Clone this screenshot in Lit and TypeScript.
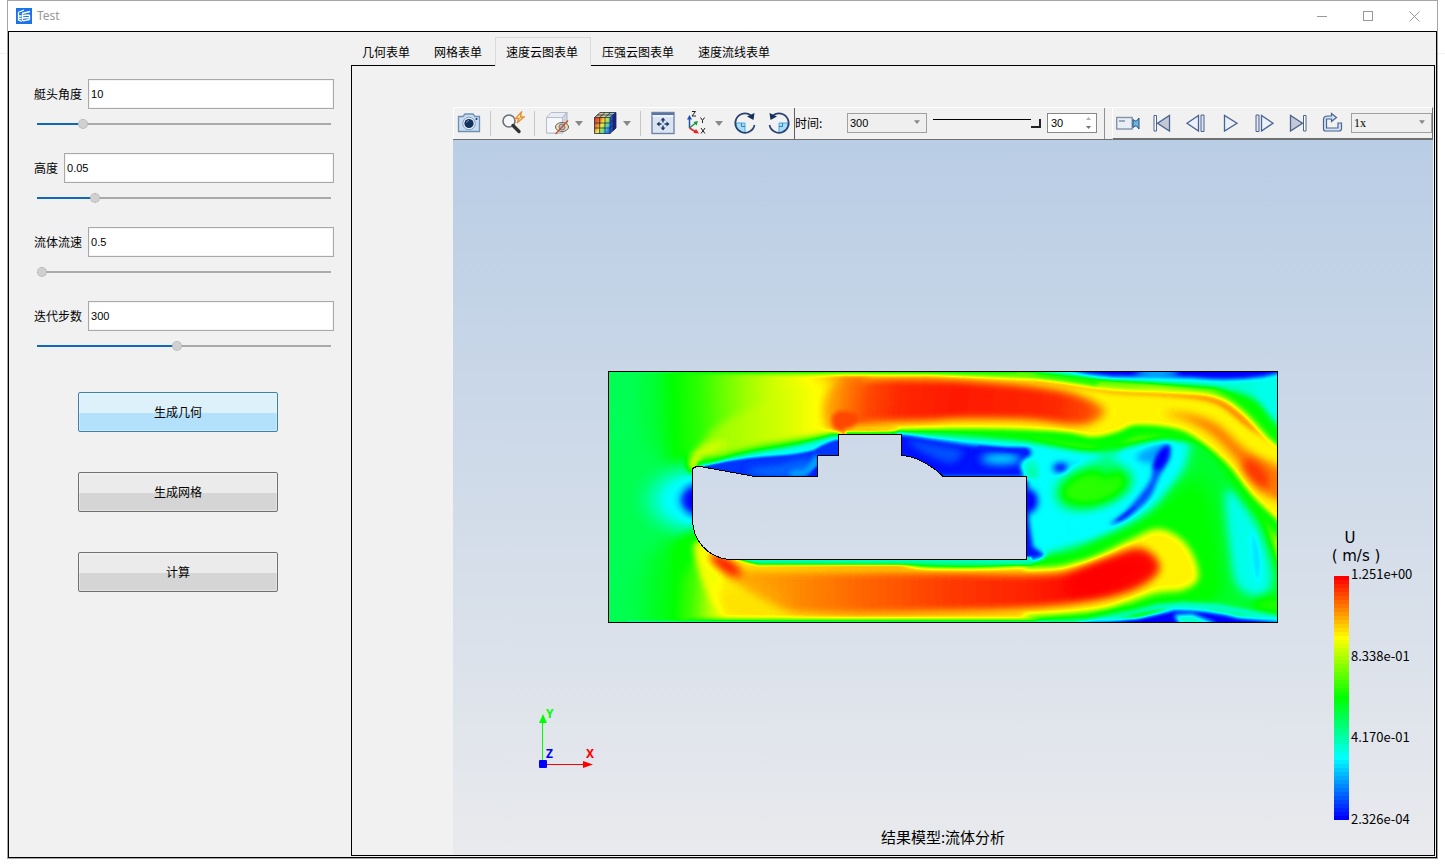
import { LitElement, html, svg, css } from "lit";
import { customElement, state } from "lit/decorators.js";

interface Param {
  id: string;
  label: string;
  value: string;
  pos: number;
}

const clamp = (n: number) => Math.max(0, Math.min(1, n));

/** Rainbow colour for a normalised magnitude: blue, cyan, green, yellow, red. */
const rainbow = (v: number) => {
  const r = clamp((v - 0.5) * 4);
  const g = v < 0.5 ? clamp(v * 4) : clamp((1 - v) * 4);
  const b = clamp((0.5 - v) * 4);
  return `rgb(${Math.round(r * 255)},${Math.round(g * 255)},${Math.round(b * 255)})`;
};

/** Grey level that carries a scalar value until the colour map is applied. */
const grey = (v: number) => {
  const n = Math.round(v * 255);
  return `rgb(${n},${n},${n})`;
};

const stops = (list: [number, number][]) =>
  list.map(([o, v]) => svg`<stop offset=${o} stop-color=${grey(v)} />`);

/** Closed Catmull-Rom curve through "x,y x,y ..." points. */
const smooth = (points: string) => {
  const p = points.split(" ").map((s) => s.split(",").map(Number));
  const n = p.length;
  let d = `M${p[0][0]} ${p[0][1]}`;
  for (let i = 0; i < n; i++) {
    const [a, b, c, e] = [p[(i - 1 + n) % n], p[i], p[(i + 1) % n], p[(i + 2) % n]];
    d += `C${b[0] + (c[0] - a[0]) / 6} ${b[1] + (c[1] - a[1]) / 6} ${c[0] - (e[0] - b[0]) / 6} ${c[1] - (e[1] - b[1]) / 6} ${c[0]} ${c[1]}`;
  }
  return d + "Z";
};

const BODY =
  "M84.5 97.5 L88.5 95.5 L95 96 L147 105.5 H209.5 V84.5 H230.5 V63.5 H293.5 V84.5 Q307 85 322 95 Q329 99 335 105.5 H418.5 V188.5 H120.5 C100 186 84.5 170 84.5 148 Z";

@customElement("velocity-field")
class VelocityField extends LitElement {
  static styles = css`
    :host { display: block; }
    svg { display: block; }
    .line { fill: none; stroke: #000; stroke-width: 1; shape-rendering: crispEdges; }
  `;

  private blob(blur: number, v: number, points: string) {
    return svg`<path filter=${`url(#b${blur})`} fill=${grey(v)} d=${smooth(points)} />`;
  }

  render() {
    return html`<svg width="670" height="252" viewBox="0 0 670 252" role="img" aria-label="U">
      <defs>
        <filter id="map" filterUnits="userSpaceOnUse" x="-40" y="-40" width="750" height="332" color-interpolation-filters="sRGB">
          <feComponentTransfer>
            <feFuncR type="table" tableValues="0 0 0 1 1" />
            <feFuncG type="table" tableValues="0 1 1 1 0" />
            <feFuncB type="table" tableValues="1 1 0 0 0" />
          </feComponentTransfer>
        </filter>
        ${[1, 2, 3, 4, 6, 9].map(
          (n) => svg`<filter id=${"b" + n} filterUnits="userSpaceOnUse" x="-80" y="-80" width="830" height="412" color-interpolation-filters="sRGB"><feGaussianBlur stdDeviation=${n} /></filter>`
        )}
        <linearGradient id="upper" gradientUnits="userSpaceOnUse" x1="0" y1="70" x2="240" y2="62">
          ${stops([[0, 0.41], [0.1, 0.42], [0.2, 0.45], [0.28, 0.5], [0.38, 0.54], [0.48, 0.6], [0.58, 0.655], [0.7, 0.705], [0.82, 0.75], [0.9, 0.79], [1, 0.87]])}
        </linearGradient>
        <linearGradient id="turn" gradientUnits="userSpaceOnUse" x1="84" y1="0" x2="240" y2="0">
          ${stops([[0, 0.64], [0.3, 0.67], [0.6, 0.71], [0.85, 0.76], [1, 0.86]])}
        </linearGradient>
        <linearGradient id="lower" gradientUnits="userSpaceOnUse" x1="0" y1="200" x2="240" y2="215">
          ${stops([[0, 0.41], [0.12, 0.43], [0.27, 0.49], [0.36, 0.57], [0.43, 0.67], [0.5, 0.75], [0.62, 0.79], [1, 0.86]])}
        </linearGradient>
        <linearGradient id="lowjet" gradientUnits="userSpaceOnUse" x1="100" y1="0" x2="550" y2="0">
          ${stops([[0, 0.82], [0.15, 0.85], [0.35, 0.9], [0.55, 0.945], [0.7, 0.965], [0.85, 1], [1, 0.98]])}
        </linearGradient>
        <linearGradient id="upjet" gradientUnits="userSpaceOnUse" x1="222" y1="20" x2="500" y2="60">
          ${stops([[0, 0.83], [0.06, 0.88], [0.14, 0.93], [0.25, 0.96], [0.45, 0.975], [0.8, 0.96], [0.92, 0.93], [1, 0.84]])}
        </linearGradient>
        <radialGradient id="stag">
          <stop offset="0" stop-color=${grey(0.02)} />
          <stop offset="0.16" stop-color=${grey(0.12)} />
          <stop offset="0.28" stop-color=${grey(0.23)} />
          <stop offset="0.48" stop-color=${grey(0.27)} />
          <stop offset="0.7" stop-color=${grey(0.35)} stop-opacity="0.8" />
          <stop offset="1" stop-color=${grey(0.42)} stop-opacity="0" />
        </radialGradient>
        <clipPath id="fluid">
          <path clip-rule="evenodd" d=${"M0 0H670V252H0Z " + BODY} />
        </clipPath>
      </defs>
      <g clip-path="url(#fluid)">
        <g filter="url(#map)">
          <rect x="-40" y="-40" width="750" height="170" fill="url(#upper)" />
          <rect x="-40" y="129" width="750" height="170" fill="url(#lower)" />
          ${this.blob(9, 0.42, "-30,80 30,76 60,96 72,130 62,164 30,184 -30,184")}

          <!-- fast flow bending over the bow -->
          <path filter="url(#b4)" fill="url(#turn)" d=${smooth("82,98 92,76 112,54 150,34 200,10 245,20 240,66 170,74 110,90")} />
          ${this.blob(3, 0.7, "81,98 84,86 94,76 110,70 120,72 100,86 90,98")}

          <!-- stagnation zone ahead of the bow -->
          <ellipse cx="90" cy="129" rx="72" ry="48" fill="url(#stag)" />
          <ellipse filter="url(#b4)" cx="88" cy="129" rx="13" ry="15" fill=${grey(0)} />
          ${this.blob(3, 0.72, "80,98 83,88 92,82 94,92 86,100")}
          ${this.blob(4, 0.5, "66,176 84,160 92,164 88,180 78,200 66,200")}
          ${this.blob(3, 0.74, "86,178 92,170 102,172 114,194 122,226 112,240 96,214")}

          <!-- wake background -->
          ${this.blob(4, 0.25, "294,61 400,63 440,70 490,77 560,65 600,78 640,130 650,200 600,190 540,190 440,192 300,192")}
          ${this.blob(6, 0.46, "592,60 640,106 664,160 680,250 560,240 500,205 450,200 430,190 480,172 512,156 538,130 572,104")}
          ${this.blob(9, 0.5, "580,110 600,120 610,160 612,220 600,226 590,180 560,146 530,150")}
          ${this.blob(4, 0.5, "420,195 470,178 510,156 556,134 592,150 606,190 604,228 540,240 470,230")}
          ${this.blob(4, 0.27, "618,120 640,140 656,172 664,206 658,222 642,224 628,212 622,180")}
          ${this.blob(2, 0.22, "644,158 652,186 650,212 645,190")}
          <ellipse filter="url(#b4)" cx="668" cy="234" rx="24" ry="8" fill=${grey(0.53)} />

          <!-- outer layers of the upper jet -->
          ${this.blob(3, 0.5, "294,50 420,52 500,50 545,44 594,50 640,100 682,156 682,180 650,146 620,106 596,76 568,69 530,69 506,80 486,79 455,75 420,70 340,65 294,62")}
          <path filter="url(#b2)" fill=${grey(0.29)} d="M400 -20H700V60L668 62Q650 30 606 18L540 13L489 10L430 3Z" />
          ${this.blob(3, 0.5, "420,4 455,9 500,17 560,20 606,24 636,42 680,88 680,60 650,30 612,18 555,15 500,11")}
          ${this.blob(3, 0.27, "648,10 700,10 700,62 668,52")}
          ${this.blob(2, 0.76, "258,50 252,28 260,7 322,6 400,8 455,14 505,22 555,25 605,32 639,56 690,96 690,164 666,146 642,122 622,96 595,72 569,58 529,54 509,61 485,66 455,61 389,58 322,58 268,58")}
          <path filter="url(#b1)" fill=${grey(0.78)} d="M230 64L228 52L262 50L290 56V59Q250 58 230 64Z" />
          <path filter="url(#b4)" fill="url(#upjet)" d=${smooth("230,66 216,46 220,24 242,9 322,8 405,13 455,20 482,29 498,40 486,51 465,54 422,49 355,48 322,50 275,52 244,56")} />
          ${this.blob(2, 0.93, "230,65 224,48 232,40 250,44 246,54 236,58")}
          ${this.blob(4, 0.88, "556,42 584,44 610,54 640,80 684,104 684,130 654,122 634,96 606,66 580,50")}
          <ellipse filter="url(#b4)" cx="648" cy="102" rx="18" ry="8" transform="rotate(48 648 102)" fill=${grey(0.95)} />

          <!-- separated pocket on the fore deck -->
          <path filter="url(#b3)" fill=${grey(0.5)} d="M92 94Q130 78 170 72Q205 66 228 61L232 90H92Z" />
          <path filter="url(#b2)" fill=${grey(0.26)} d="M90 96Q120 85 175 77Q205 72 232 62V90L200 92H90Z" />
          <path filter="url(#b1)" fill=${grey(0.05)} d="M91 96Q125 87 178 84Q196 82 206 79Q218 71 232 68V110H100Z" />
          ${this.blob(3, 0.1, "140,98 170,94 200,88 206,100 180,106 150,104")}
          ${this.blob(2, 0.16, "184,100 198,97 208,83 210,96 196,105 182,105")}
          ${this.blob(1, 0.03, "205,99 211,96 212,110 200,108")}
          <path filter="url(#b1)" fill="none" stroke=${grey(0.28)} stroke-width="2" d="M238 62.500L294 62" />

          <!-- pocket aft of the sail -->
          <path filter="url(#b2)" fill=${grey(0.02)} d="M290 62L322 68L355 73L395 77L420 77Q427 81 420 86Q412 90 412 96L416 106H290Z" />
          ${this.blob(3, 0.08, "300,70 330,74 354,80 344,92 320,84")}
          <ellipse filter="url(#b4)" cx="393" cy="88" rx="20" ry="5" fill=${grey(0.24)} />
          <path filter="url(#b1)" fill="none" stroke=${grey(0.03)} stroke-width="4" d="M370 77L400 79L419 80" />
          ${this.blob(2, 0.3, "416,92 428,90 428,104 420,106")}

          <!-- recirculation in the wake -->
          <ellipse filter="url(#b3)" cx="453" cy="97" rx="8" ry="5" fill=${grey(0)} />
          <ellipse filter="url(#b3)" cx="468" cy="94" rx="10" ry="2" transform="rotate(-14 468 94)" fill=${grey(0.15)} />
          <ellipse filter="url(#b6)" cx="486" cy="116" rx="38" ry="21" transform="rotate(-14 486 116)" fill=${grey(0.54)} />
          <ellipse filter="url(#b3)" cx="425" cy="102" rx="5" ry="5" fill=${grey(0.35)} />
          ${this.blob(6, 0.38, "494,84 504,80 506,94 500,104 492,98")}
          <path filter="url(#b4)" fill="none" stroke=${grey(0.25)} stroke-width="22" d="M566 74Q560 100 544 122Q524 146 470 158" />
          ${this.blob(2, 0.08, "561,75 561,88 551,106 542,126 526,142 514,150 502,153 518,140 532,124 543,108 545,92 550,80")}
          ${this.blob(3, 0.16, "528,86 544,76 560,74 552,86 540,92")}
          ${this.blob(2, 0, "560,74 560,86 552,98 546,96 550,82")}
          ${this.blob(1, 0.05, "528,136 518,146 508,150 520,140")}

          <!-- base of the stern -->
          <ellipse filter="url(#b3)" cx="420" cy="130" rx="10" ry="12" fill=${grey(0)} />
          <path filter="url(#b2)" fill=${grey(0.02)} d="M412 110H420L421 150L425 176L438 184L430 192H412Z" />

          <!-- lower jet -->
          ${this.blob(3, 0.5, "420,194 470,186 520,162 556,148 590,170 602,200 590,222 560,230 500,246 420,246")}
          <path filter="url(#b1)" fill=${grey(0.32)} d="M122 186H424V194H150Z" />
          ${this.blob(3, 0.76, "118,196 150,196 300,196 430,197 466,192 489,185 522,169 549,158 572,167 586,186 590,208 575,219 549,222 522,231 489,241 422,245 300,245 150,245 118,244")}
          <path filter="url(#b4)" fill="url(#lowjet)" d=${smooth("101,182 120,192 150,199 322,201 422,203 462,200 495,189 528,177 546,185 551,200 530,217 489,229 422,237 322,241 220,243 170,238 126,212")} />
          ${this.blob(9, 0.78, "112,214 136,222 172,240 150,250 116,240")}
          <ellipse filter="url(#b4)" cx="118" cy="194" rx="18" ry="6" transform="rotate(34 118 194)" fill=${grey(0.99)} />
          <ellipse filter="url(#b6)" cx="500" cy="204" rx="44" ry="12" transform="rotate(-16 500 204)" fill=${grey(1)} />

          <!-- wall layers -->
          <path filter="url(#b2)" fill="none" stroke=${grey(0.5)} stroke-width="5" d="M90 -1Q240 1 322 1L430 5L490 12" />
          <path filter="url(#b1)" fill="none" stroke=${grey(0.3)} stroke-width="3" d="M25 -1H240L430 0" />
          <path filter="url(#b2)" fill=${grey(0)} d="M430 -8H680V0L655 6Q620 11 585 7L545 6L505 6L480 3Z" />
          <ellipse filter="url(#b3)" cx="549" cy="2" rx="22" ry="3" fill=${grey(0.25)} />
          <path filter="url(#b2)" fill="none" stroke=${grey(0.5)} stroke-width="6" d="M80 251H430L480 246L520 238" />
          <path filter="url(#b1)" fill="none" stroke=${grey(0.28)} stroke-width="3" d="M20 252H440" />
          <path filter="url(#b2)" fill="none" stroke=${grey(0.26)} stroke-width="5" d="M430 253L480 251L520 243L550 236L575 234L610 236L672 248" />
          <path filter="url(#b2)" fill=${grey(0)} d="M470 252L530 246L566 238Q600 238 630 246L672 250V262H470Z" />
          <path filter="url(#b2)" fill=${grey(0.3)} d="M566 244L584 243L606 252L612 260H576Z" />
        </g>
      </g>
      <path class="line" d=${BODY} />
      <rect class="line" x="0.5" y="0.5" width="669" height="251" />
    </svg>`;
  }
}

@customElement("app-root")
class AppRoot extends LitElement {
  static styles = css`
    :host {
      display: block;
      height: 100vh;
      background: #fff;
      color: #000;
      font: 12px/16px "Liberation Sans", "Noto Sans CJK SC", sans-serif;
    }
    * { box-sizing: border-box; }
    svg { display: block; }
    button, input, select { font: inherit; color: inherit; margin: 0; }
    .desktop {
      height: 100%;
      padding: 0 7px 7px;
      background: linear-gradient(#f2f2f2, #f2f2f2) 0 53px / 100% 1px no-repeat #fff;
    }
    .window {
      height: 100%;
      display: flex;
      flex-direction: column;
      border: 1px solid #a5a5a5;
      background: #fff;
    }
    .titlebar { height: 30px; flex: none; display: flex; align-items: center; padding-left: 8px; color: #999; }
    .name { flex: 1; padding-left: 5px; font: 12px/16px "Noto Sans", sans-serif; }
    .winbtn { width: 46px; height: 30px; padding: 0; border: 0; background: none; display: grid; place-items: center; }
    .client { flex: 1; min-height: 0; display: flex; border: 1px solid #000; background: #f1f1f1; }

    .side { width: 342px; flex: none; padding: 47px 17px 0 25px; }
    .field { height: 74px; }
    .entry { display: flex; align-items: center; gap: 6px; height: 30px; }
    .entry label { font-family: "Noto Sans CJK SC", sans-serif; }
    .text { flex: 1; min-width: 0; height: 30px; padding: 0 2px 1px; border: 1px solid #a9a9a9; background: #fff; outline: 0; font-size: 11px; box-shadow: inset 0 0 0 1px #f4f4f4; }
    .slide { appearance: none; display: block; width: calc(100% - 6px); height: 16px; margin: 7px 3px 0; background: none; outline: 0; }
    .slide::-webkit-slider-runnable-track {
      height: 2px;
      background: linear-gradient(#0f68b8, #0f68b8) 0 0 / var(--fill) 100% no-repeat #aaa;
    }
    .slide::-webkit-slider-thumb { appearance: none; width: 10px; height: 10px; margin-top: -4px; border: 1px dotted #aaa; border-radius: 50%; background: #d0d0d0; }
    .actions { display: flex; flex-direction: column; align-items: center; gap: 40px; padding: 17px 12px 0 0; }
    .action { width: 200px; height: 40px; border: 1px solid #707070; border-radius: 2px; background: linear-gradient(#ebebeb 52%, #d5d5d5 52%); box-shadow: inset 0 0 0 1px rgba(255, 255, 255, 0.35); font-family: "Noto Sans CJK SC", sans-serif; }
    .action.hot { border-color: #3c7fb1; background: linear-gradient(#ddf1fb 52%, #b3e0fa 52%); }

    .main { flex: 1; min-width: 0; display: flex; flex-direction: column; padding: 0 1px 1px 0; }
    .tabs { display: flex; height: 33px; padding-top: 5px; flex: none; }
    .tab { height: 29px; padding: 0 12px 0 10px; border: 1px solid transparent; background: none; font-family: "Noto Sans CJK SC", sans-serif; white-space: nowrap; }
    .tab.on { position: relative; background: #f1f1f1; border-color: #d9d9d9; border-bottom-color: #f1f1f1; }
    .panel { flex: 1; min-height: 0; display: flex; border: 1px solid #000; padding: 41px 1px 0 101px; }
    .viewer { flex: 1; min-width: 0; display: flex; flex-direction: column; }

    .toolbar { display: flex; height: 33px; flex: none; border-bottom: 1px solid #707070; border-top: 1px solid #fff; }
    .group { display: flex; align-items: center; }
    .first { border-left: 1px solid #fff; border-right: 1px solid #606060; padding: 0 3px 1px; }
    .mid { border-right: 1px solid #909090; padding: 0 7px 1px 0; }
    .last { flex: 1; margin: -1px 0 -1px 7px; border: 1px solid #fff; border-right-color: #707070; border-bottom: 2px solid #707070; padding-left: 3px; }
    .tool, .drop { padding: 0; border: 0; background: none; }
    .tool { width: 24px; height: 24px; }
    .tool + .tool, .drop + .tool { margin-left: 10px; }
    .drop { width: 8px; height: 24px; margin-left: 6px; display: grid; place-items: center; }
    .sep { width: 1px; height: 25px; margin: 0 10px 0 9px; background: #c8c8c8; }
    .time { font: 12px/16px "Noto Sans CJK SC", sans-serif; width: 52px; }
    .combo { position: relative; height: 20px; }
    .combo select { appearance: none; display: block; width: 100%; height: 20px; padding: 0 2px; border: 1px solid #a0a0a0; border-radius: 0; background: #efefef; font-size: 11px; outline: 0; }
    .combo svg { position: absolute; right: 7px; top: 7px; pointer-events: none; }
    .frame { width: 80px; }
    .speed { flex: 1; margin-left: 7px; }
    .combo.speed select { font: 12px/16px "Liberation Serif", serif; }
    .seek { appearance: none; width: 108px; height: 20px; margin: 0 6px; background: none; outline: 0; }
    .seek::-webkit-slider-runnable-track { height: 9px; background: linear-gradient(#000, #000) 0 0 / calc(100% - 10px) 1px no-repeat; }
    .seek::-webkit-slider-thumb { appearance: none; width: 10px; height: 9px; background: #f0f0f0; border: solid #222; border-width: 0 2px 2px 0; }
    .spin { display: flex; width: 50px; height: 20px; border: 1px solid #888; background: #fff; }
    .spin input { flex: 1; min-width: 0; border: 0; outline: 0; padding: 0 0 0 3px; font-size: 11px; background: none; }
    .steps { display: flex; flex-direction: column; width: 15px; }
    .steps button { flex: 1; padding: 0; border: 0; background: none; display: grid; place-items: center; }

    .scene { position: relative; flex: 1; min-height: 0; display: grid; place-items: center; padding-bottom: 2px; background: linear-gradient(#b9cde5, #e9eaed); overflow: hidden; }
    .axes { position: absolute; left: 82px; bottom: 85px; }
    .axes text { font: bold 12px "Noto Sans", sans-serif; }
    .caption { position: absolute; left: 0; right: 0; bottom: 7px; text-align: center; font: 15px/22px "Noto Sans CJK SC", sans-serif; }
    .legend { position: absolute; right: 20px; bottom: 27px; width: 82px; font-family: "Noto Sans CJK SC", sans-serif; }
    .unit { width: 50px; text-align: center; font: 15px/18px "DejaVu Sans", sans-serif; white-space: nowrap; }
    .var { width: 38px; text-align: center; font: 15px/18px "DejaVu Sans", sans-serif; }
    .scale { display: flex; gap: 2px; padding-left: 3px; }
    .bar { margin: 11px 0 8px; }
    .ticks { display: flex; flex-direction: column; justify-content: space-between; font-size: 13px; line-height: 18px; }
  `;

  @state() private params: Param[] = [
    { id: "angle", label: "艇头角度", value: "10", pos: 14.5 },
    { id: "height", label: "高度", value: "0.05", pos: 18.7 },
    { id: "speed", label: "流体流速", value: "0.5", pos: 0 },
    { id: "steps", label: "迭代步数", value: "300", pos: 47.7 },
  ];
  @state() private tab = 2;

  private move(i: number, e: Event) {
    const pos = Number((e.target as HTMLInputElement).value);
    this.params = this.params.map((p, k) => (k === i ? { ...p, pos } : p));
  }

  private arrow(small = false) {
    return html`<svg width=${small ? 6 : 8} height=${small ? 4 : 5} viewBox="0 0 8 5"><path d="M0 0H8L4 5Z" fill="#888" /></svg>`;
  }

  private tool(label: string, content: unknown) {
    return html`<button class="tool" aria-label=${label}><svg width="24" height="24" viewBox="0 0 24 24" fill="none">${content}</svg></button>`;
  }

  private cube() {
    return svg`
      <defs>
        <linearGradient id="face" x1="0" y1="0.1" x2="1" y2="0.7">
          <stop offset="0" stop-color="#e8301c" /><stop offset="0.3" stop-color="#f08020" />
          <stop offset="0.5" stop-color="#f4ec40" /><stop offset="0.68" stop-color="#8ce060" />
          <stop offset="0.84" stop-color="#40c8e8" /><stop offset="1" stop-color="#2070e0" />
        </linearGradient>
        <linearGradient id="lid"><stop offset="0" stop-color="#e0a070" /><stop offset="0.5" stop-color="#d8e090" /><stop offset="1" stop-color="#50a8d0" /></linearGradient>
      </defs>
      <path d="M1.500 6.500L7 1.500H23L17 6.500Z" fill="url(#lid)" />
      <rect x="1.500" y="6.500" width="15.500" height="16" fill="url(#face)" />
      <path d="M17 6.500L23 1.500V17L17 22.500Z" fill="#1c50d8" />
      <path d="M20 4V20L23 17V1.500Z" fill="#1a1f98" />
      <path d="M1.500 6.500H17V22.500H1.500ZM1.500 6.500L7 1.500H23L17 6.500M23 1.500V17L17 22.500M6.700 22.500V6.500L12 1.500M12 22.500V6.500L17.500 1.500M1.500 12H17L23 6.500M1.500 17H17L23 12M4 4H20V20" stroke="#222844" stroke-width="0.800" />`;
  }

  render() {
    return html`
      <div class="desktop">
        <div class="window">
          <div class="titlebar">
            <svg width="16" height="16" viewBox="0 0 16 16">
              <rect width="16" height="16" fill="#1a73e8" />
              <path d="M2 4.500L8 2M2.500 5V12L6 13.500M3 8H5.500M3 10.500H5.500M6 5.500L14 3.500M6.500 5V13M7 7.500L13.500 7M7 10L13.500 9.500M7 12.800L13.500 11.500M13.500 7V11.500" stroke="#fff" stroke-width="1.300" fill="none" />
            </svg>
            <div class="name">Test</div>
            <button class="winbtn" aria-label="Minimize"><svg width="11" height="11"><path d="M0 5.500H10" stroke="#999" /></svg></button>
            <button class="winbtn" aria-label="Maximize"><svg width="11" height="11"><rect x="0.500" y="0.500" width="9" height="9" fill="none" stroke="#999" /></svg></button>
            <button class="winbtn" aria-label="Close"><svg width="11" height="11"><path d="M0.500 0.500L10.500 10.500M10.500 0.500L0.500 10.500" stroke="#999" /></svg></button>
          </div>
          <div class="client">
            <div class="side">
              ${this.params.map(
                (p, i) => html`<div class="field">
                  <div class="entry">
                    <label for=${p.id}>${p.label}</label>
                    <input class="text" id=${p.id} type="text" .value=${p.value} />
                  </div>
                  <input class="slide" type="range" min="0" max="100" step="0.1" aria-label=${p.label} .value=${String(p.pos)} style=${`--fill:${p.pos}%`} @input=${(e: Event) => this.move(i, e)} />
                </div>`
              )}
              <div class="actions">
                <button class="action hot">生成几何</button>
                <button class="action">生成网格</button>
                <button class="action">计算</button>
              </div>
            </div>
            <div class="main">
              <div class="tabs" role="tablist">
                ${["几何表单", "网格表单", "速度云图表单", "压强云图表单", "速度流线表单"].map(
                  (t, i) => html`<button class="tab ${i === this.tab ? "on" : ""}" role="tab" aria-selected=${i === this.tab} @click=${() => (this.tab = i)}>${t}</button>`
                )}
              </div>
              <div class="panel">
                <div class="viewer">
                  <div class="toolbar">${this.viewTools()}${this.timeTools()}${this.playTools()}</div>
                  <div class="scene">
                    <velocity-field></velocity-field>
                    ${this.axes()}
                    <div class="caption">结果模型:流体分析</div>
                    ${this.legend()}
                  </div>
                </div>
              </div>
            </div>
          </div>
        </div>
      </div>
    `;
  }

  private viewTools() {
    return html`<div class="group first">
      ${this.tool("Screenshot", svg`
        <path d="M1.500 5.500H6L8 3H16L18 5.500H22.500V20.500H1.500Z" fill="#c9dcf0" stroke="#6f8fb5" stroke-width="1.300" />
        <circle cx="12" cy="12.500" r="6.300" fill="#e4eef8" stroke="#7f9dc0" />
        <circle cx="12" cy="12.500" r="4.600" fill="#16305c" />
        <path d="M9.500 11.500A3 3 0 0 1 12 9.500" stroke="#7fa4d0" />
        <circle cx="19.500" cy="8" r="1" fill="#16305c" />`)}
      <span class="sep"></span>
      ${this.tool("Quick zoom", svg`
        <circle cx="8" cy="10" r="6" fill="#f4f6f8" stroke="#6b7078" stroke-width="1.600" />
        <path d="M12 14.500L18 20.500" stroke="#333" stroke-width="3.400" stroke-linecap="round" />
        <path d="M20.500 1L14.500 7.500H18L16 12L23 6H19.500Z" fill="#fff0d0" stroke="#e8902c" stroke-width="1.300" />`)}
      <span class="sep"></span>
      ${this.tool("Hide", svg`
        <path d="M1.500 6.500L6 1.500H22L17.500 6.500V22H1.500Z" fill="#e9edf3" stroke="#b4bdca" />
        <path d="M17.500 6.500L22 1.500V17L17.500 22Z" fill="#cfd7e4" stroke="#a9b4c4" />
        <path d="M1.500 6.500H17.500V22H1.500Z" fill="#f4f6fa" stroke="#b4bdca" />
        <ellipse cx="17" cy="16" rx="6.500" ry="4.500" fill="#f3dda2" stroke="#5f6068" />
        <circle cx="17" cy="16" r="3" fill="#b4bcd0" stroke="#6f7a96" />
        <path d="M10.500 23L23 9.500" stroke="#c8502c" stroke-width="1.300" />`)}
      <button class="drop" aria-label="Hide options">${this.arrow()}</button>
      ${this.tool("Color", this.cube())}
      <button class="drop" aria-label="Color options">${this.arrow()}</button>
      <span class="sep"></span>
      ${this.tool("Fit", svg`
        <rect x="1" y="1.500" width="22" height="21" fill="#dbe5f1" stroke="#6f84a8" stroke-width="1.400" />
        <path d="M1 3H23" stroke="#5b76a6" stroke-width="2" />
        <path d="M1.500 5H22.500" stroke="#fff" />
        <path d="M12 6.500L14.500 9.500H9.500ZM12 19.500L14.500 16.500H9.500ZM5.500 13L8.500 10.500V15.500ZM18.500 13L15.500 10.500V15.500Z" fill="#1f3866" />
        <path d="M12 9V11.500M12 14.500V17M8 13H10.500M13.500 13H16" stroke="#1f3866" stroke-width="1.400" />`)}
      ${this.tool("Orientation", svg`
        <path d="M4.500 17V7" stroke="#1f50b8" stroke-width="1.500" /><path d="M4.500 4L7 8.500H2Z" fill="#1f50b8" />
        <path d="M4.500 17L10 12.500" stroke="#1a9440" stroke-width="1.500" /><path d="M13 10L11.500 14.500L8.500 11Z" fill="#1a9440" />
        <path d="M4.500 17L10 20.500" stroke="#e82020" stroke-width="1.500" /><path d="M14 22.500L8.500 22L11 18Z" fill="#e82020" />
        <path d="M7 0.500H10.500L7 5H11M15.500 6.500L17.500 9.500L19.500 6.500M17.500 9.500V12M16 17L20 22.500M20 17L16 22.500" stroke="#222" />`)}
      <button class="drop" aria-label="Orientation options">${this.arrow()}</button>
      ${this.tool("Rotate clockwise", svg`
        <path d="M2.500 12H12V21.500A9.500 9.500 0 0 1 2.500 12Z" fill="#a9dcf7" stroke="#48a8dc" />
        <path d="M8.500 12V15.500H12" stroke="#2a84c0" />
        <path d="M21.500 14A9.700 9.700 0 1 1 18 4.500" stroke="#2a4270" stroke-width="1.700" />
        <path d="M21.500 2L20.500 9L14 5.500Z" fill="#16305c" />`)}
      ${this.tool("Rotate counterclockwise", svg`
        <path d="M21.500 12H12V21.500A9.500 9.500 0 0 0 21.500 12Z" fill="#a9dcf7" stroke="#48a8dc" />
        <path d="M15.500 12V15.500H12" stroke="#2a84c0" />
        <path d="M2.500 14A9.700 9.700 0 1 0 6 4.500" stroke="#2a4270" stroke-width="1.700" />
        <path d="M2.500 2L3.500 9L10 5.500Z" fill="#16305c" />`)}
    </div>`;
  }

  private timeTools() {
    return html`<div class="group mid">
      <label class="time" for="time">时间:</label>
      <div class="combo frame"><select id="time"><option>300</option></select>${this.arrow(true)}</div>
      <input class="seek" type="range" min="0" max="30" .value=${"30"} aria-label="时间" />
      <div class="spin">
        <input type="text" value="30" aria-label="时间" />
        <span class="steps">
          <button aria-label="+"><svg width="5" height="3"><path d="M0 3H5L2.500 0Z" fill="#b0b0b0" /></svg></button>
          <button aria-label="-"><svg width="5" height="3"><path d="M0 0H5L2.500 3Z" fill="#707070" /></svg></button>
        </span>
      </div>
    </div>`;
  }

  private playTools() {
    const s = "#4a6390";
    return html`<div class="group last">
      ${this.tool("Record", svg`
        <rect x="0.700" y="6.500" width="15.500" height="11.500" fill="#e9eef5" stroke="#8292ac" stroke-width="1.400" />
        <path d="M3 10H9" stroke="#9aa8bc" stroke-width="2" />
        <path d="M17 8.500L19 10H20.500L23 7V18L20.500 15H19L17 16.500Z" fill="#6cb4e4" stroke="#24527c" />`)}
      ${this.tool("First", svg`<path d="M4 4.500H6.500V20H4Z" fill="#fff" stroke=${s} /><path d="M19.500 4.500V20L7.500 12.200Z" fill="#c3cad5" stroke=${s} stroke-width="1.300" />`)}
      ${this.tool("Previous", svg`<path d="M14.500 4.500V20L3 12.200Z" fill="#eaf1fa" stroke=${s} stroke-width="1.300" /><path d="M17 4H20V20.500H17Z" fill="#dfe6f0" stroke=${s} />`)}
      ${this.tool("Play", svg`<path d="M6.500 4.500V20L19 12.200Z" fill="#eaf1fa" stroke=${s} stroke-width="1.300" />`)}
      ${this.tool("Next", svg`<path d="M9.500 4.500V20L21 12.200Z" fill="#eaf1fa" stroke=${s} stroke-width="1.300" /><path d="M4 4H7V20.500H4Z" fill="#dfe6f0" stroke=${s} />`)}
      ${this.tool("Last", svg`<path d="M4.500 4.500V20L16.500 12.200Z" fill="#c3cad5" stroke=${s} stroke-width="1.300" /><path d="M17.500 4.500H20V20H17.500Z" fill="#fff" stroke=${s} />`)}
      ${this.tool("Loop", svg`<path d="M8 5H11.500V2.500L16.500 6.500L11.500 10.500V8H6.500V17H18V12H21.500V17.500Q21.500 20 19 20H5.500Q3.500 20 3.500 18V8.500Q3.500 5 8 5Z" fill="#d3e2f2" stroke=${s} stroke-width="1.200" />`)}
      <div class="combo speed"><select aria-label="Speed"><option>1x</option></select>${this.arrow(true)}</div>
    </div>`;
  }

  private axes() {
    return html`<svg class="axes" width="66" height="66" viewBox="0 0 66 66">
      <path d="M7.500 60V18" stroke="#00ff00" /><path d="M8 10L12 19H4Z" fill="#00ff00" />
      <path d="M8 60.500H50" stroke="#ff0000" /><path d="M58 60.500L48 57V64Z" fill="#ff0000" />
      <rect x="4" y="56" width="8" height="8" rx="1" fill="#0000ff" />
      <text x="11" y="14" fill="#00ff00">Y</text>
      <text x="11" y="54" fill="#0000ff">Z</text>
      <text x="51" y="54" fill="#ff0000">X</text>
    </svg>`;
  }

  private legend() {
    const n = 61;
    return html`<div class="legend">
      <div class="var">U</div>
      <div class="unit">( m/s )</div>
      <div class="scale">
        <svg class="bar" width="15" height="244" viewBox="0 0 15 244" shape-rendering="crispEdges">
          ${Array.from({ length: n }, (_, i) => svg`<rect y=${i * 4} width="15" height="4" fill=${rainbow(1 - i / (n - 1))} />`)}
        </svg>
        <div class="ticks"><span>1.251e+00</span><span>8.338e-01</span><span>4.170e-01</span><span>2.326e-04</span></div>
      </div>
    </div>`;
  }
}
